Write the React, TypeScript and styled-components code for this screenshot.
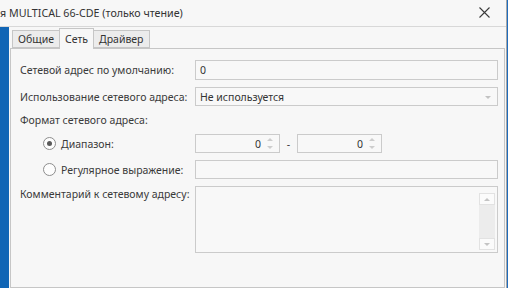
import styled, { createGlobalStyle } from 'styled-components';

const GlobalStyle = createGlobalStyle`
	html, body {
		margin: 0;
		padding: 0;
		background: #f7f7f7;
	}
	body {
		font-family: 'Noto Sans', 'Open Sans', sans-serif;
		font-size: 10.5px;
		color: #3a3a3a;
	}
`;

const Frame = styled.div`
	width: 508px;
	height: 288px;
	box-sizing: border-box;
	border-right: 1px solid #1f6cbd;
	overflow: hidden;
`;

const Window = styled.div`
	height: 100%;
	display: flex;
	flex-direction: column;
	background: #f7f7f7;
	border-right: 1px solid #a7a7a7;
`;

const TitleBar = styled.div`
	height: 27px;
	box-sizing: border-box;
	flex-shrink: 0;
	display: flex;
	align-items: center;
	justify-content: space-between;
	padding: 0 16px 1px 0;
	border-bottom: 1px solid #d8d8d8;
`;

const Title = styled.span`
	font-size: 10.7px;
	color: #333;
	white-space: nowrap;
`;

const CloseIcon = () => (
	<svg width="11" height="11" viewBox="0 0 11 11">
		<path d="M0.5 0.5 L10.5 10.5 M10.5 0.5 L0.5 10.5" stroke="#3a3a3a" strokeWidth="1.1" />
	</svg>
);

const Body = styled.div`
	flex: 1;
	display: flex;
	min-height: 0;
`;

const Strip = styled.div`
	width: 9px;
	flex-shrink: 0;
	background: #1065b5;
`;

const Main = styled.div`
	flex: 1;
	display: flex;
	flex-direction: column;
	padding: 1px 1px 0 1px;
	min-width: 0;
`;

const TabRow = styled.div`
	display: flex;
	align-items: flex-end;
	height: 20px;
	padding-left: 2px;
`;

const Tab = styled.div<{ $active?: boolean }>`
	box-sizing: border-box;
	height: ${(p) => (p.$active ? '21px' : '18px')};
	margin-bottom: ${(p) => (p.$active ? '-1px' : '0')};
	padding: 0 5px;
	display: flex;
	align-items: center;
	justify-content: center;
	border: 1px solid #c6c6c6;
	border-bottom: ${(p) => (p.$active ? 'none' : '1px solid #c6c6c6')};
	margin-left: -1px;
	background: ${(p) => (p.$active ? '#f7f7f7' : '#ececec')};
	color: #333;
	position: relative;
	z-index: ${(p) => (p.$active ? 1 : 0)};
	&:first-child {
		margin-left: 0;
	}
`;

const Panel = styled.div`
	flex: 1;
	border: 1px solid #c6c6c6;
	background: #f7f7f7;
	padding: 11px 6px 0 9px;
	display: grid;
	grid-template-columns: 175px 1fr;
	grid-template-rows: 20px 19px 14px 19px 19px 67px;
	row-gap: 7px;
	align-items: center;
`;

const Label = styled.div<{ $indent?: boolean; $top?: boolean }>`
	display: flex;
	align-items: center;
	gap: 5px;
	padding-left: ${(p) => (p.$indent ? '23px' : '0')};
	align-self: ${(p) => (p.$top ? 'start' : 'center')};
	margin-top: ${(p) => (p.$top ? '1px' : '0')};
	white-space: nowrap;
`;

const FullLabel = styled(Label)`
	grid-column: 1 / span 2;
`;

const Field = styled.div`
	box-sizing: border-box;
	height: 100%;
	border: 1px solid #cbcbcb;
	background: #f8f8f8;
	display: flex;
	align-items: center;
	padding: 0 4px;
	color: #333;
	position: relative;
`;

const Arrow = styled.span`
	position: absolute;
	right: 6px;
	top: 50%;
	margin-top: -1px;
	width: 0;
	height: 0;
	border-left: 3px solid transparent;
	border-right: 3px solid transparent;
	border-top: 3px solid #c2c2c2;
`;

const RangeBox = styled.div`
	display: flex;
	align-items: center;
	height: 100%;
`;

const SpinField = styled(Field)`
	width: 85px;
	justify-content: flex-end;
	padding-right: 18px;
`;

const SpinArrows = styled.span`
	position: absolute;
	right: 6px;
	top: 3px;
	bottom: 3px;
	display: flex;
	flex-direction: column;
	justify-content: space-between;
	&::before,
	&::after {
		content: '';
		width: 0;
		height: 0;
		border-left: 3px solid transparent;
		border-right: 3px solid transparent;
	}
	&::before {
		border-bottom: 3px solid #cdcdcd;
	}
	&::after {
		border-top: 3px solid #cdcdcd;
	}
`;

const Dash = styled.span`
	width: 17px;
	text-align: center;
`;

const Memo = styled(Field)`
	align-items: stretch;
	padding: 0;
	justify-content: flex-end;
`;

const ScrollBar = styled.div`
	width: 16px;
	margin: 6px 2px 2px 0;
	display: flex;
	flex-direction: column;
	background: #ececec;
`;

const ScrollButton = styled.div<{ $down?: boolean }>`
	height: 12px;
	box-sizing: border-box;
	background: #fbfbfb;
	border: 1px solid #e2e2e2;
	display: flex;
	align-items: center;
	justify-content: center;
	margin-top: ${(p) => (p.$down ? 'auto' : '0')};
	&::after {
		content: '';
		border-left: 3px solid transparent;
		border-right: 3px solid transparent;
		${(p) => (p.$down ? 'border-top: 3px solid #c4c4c4;' : 'border-bottom: 3px solid #c4c4c4;')}
	}
`;

const Radio = styled.span<{ $checked?: boolean }>`
	box-sizing: border-box;
	width: 13px;
	height: 13px;
	border-radius: 50%;
	border: 1px solid #8d8d8d;
	background: #fdfdfd;
	display: inline-flex;
	align-items: center;
	justify-content: center;
	flex-shrink: 0;
	&::after {
		content: '';
		width: 5px;
		height: 5px;
		border-radius: 50%;
		background: ${(p) => (p.$checked ? '#5a5a5a' : 'transparent')};
	}
`;

export default function App() {
	return (
		<>
			<GlobalStyle />
			<Frame>
				<Window>
					<TitleBar>
						<Title>я MULTICAL 66-CDE (только чтение)</Title>
						<CloseIcon />
					</TitleBar>
					<Body>
						<Strip />
						<Main>
							<TabRow>
								<Tab>Общие</Tab>
								<Tab $active>Сеть</Tab>
								<Tab>Драйвер</Tab>
							</TabRow>
							<Panel>
								<Label>Сетевой адрес по умолчанию:</Label>
								<Field>0</Field>

								<Label>Использование сетевого адреса:</Label>
								<Field>
									Не используется
									<Arrow />
								</Field>

								<FullLabel>Формат сетевого адреса:</FullLabel>

								<Label $indent>
									<Radio $checked />
									Диапазон:
								</Label>
								<RangeBox>
									<SpinField>
										0
										<SpinArrows />
									</SpinField>
									<Dash>-</Dash>
									<SpinField>
										0
										<SpinArrows />
									</SpinField>
								</RangeBox>

								<Label $indent>
									<Radio />
									Регулярное выражение:
								</Label>
								<Field />

								<Label $top>Комментарий к сетевому адресу:</Label>
								<Memo>
									<ScrollBar>
										<ScrollButton />
										<ScrollButton $down />
									</ScrollBar>
								</Memo>
							</Panel>
						</Main>
					</Body>
				</Window>
			</Frame>
		</>
	);
}
